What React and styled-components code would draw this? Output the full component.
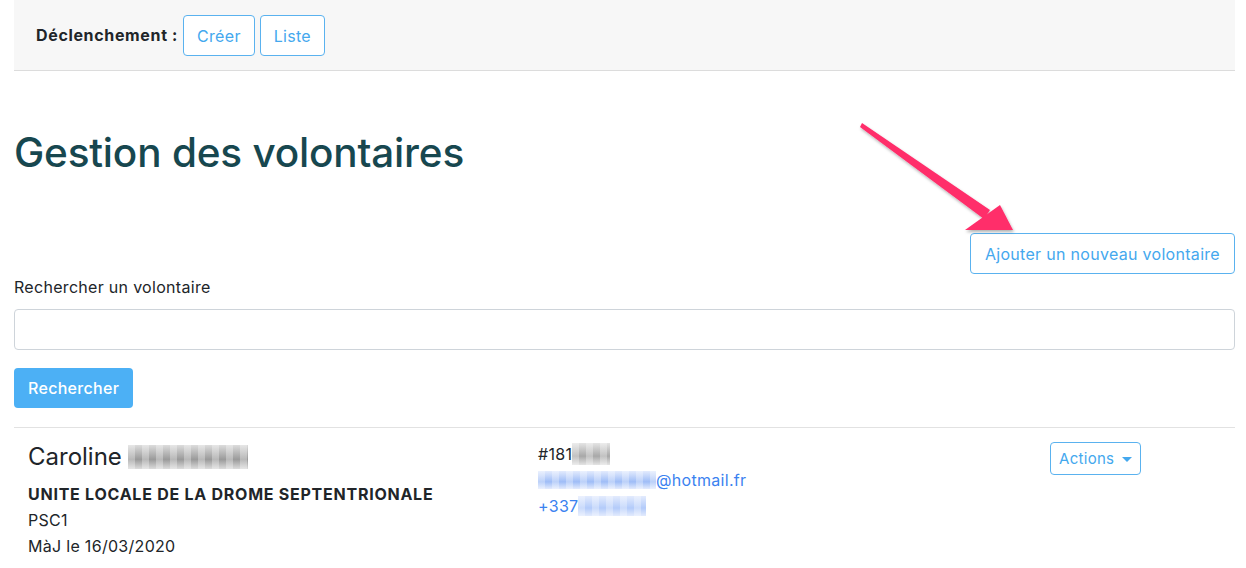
import React from "react";
import styled, { createGlobalStyle } from "styled-components";

const GlobalStyle = createGlobalStyle`
  body {
    margin: 0;
    background: #fff;
    font-family: Inter, "Liberation Sans", Arial, sans-serif;
    color: #212529;
    letter-spacing: 0.3px;
  }
`;

const Page = styled.div`
  position: relative;
  padding: 0 11px 0 14px;
  width: 1246px;
  box-sizing: border-box;
`;

const TopBar = styled.div`
  display: flex;
  align-items: center;
  gap: 5px;
  height: 71px;
  padding: 1px 0 0 22px;
  background: #f7f7f7;
  border-bottom: 1px solid #dcdcdc;
  box-sizing: border-box;
`;

const BarLabel = styled.span`
  font-weight: 700;
  font-size: 16px;
  letter-spacing: 0.65px;
  padding-bottom: 2px;
`;

const OutlineButton = styled.button`
  font-family: inherit;
  letter-spacing: 0.3px;
  font-size: ${(p) => p.$size || 16}px;
  height: ${(p) => p.$h || 41}px;
  padding: 0 ${(p) => p.$px || 13}px;
  margin-top: ${(p) => p.$mt || 0}px;
  background: #fff;
  color: #44a8ee;
  border: 1px solid #5ab2ef;
  border-radius: 4px;
  display: inline-flex;
  align-items: center;
  gap: 8px;
  cursor: pointer;
`;

const Caret = styled.span`
  width: 0;
  height: 0;
  border-left: 5px solid transparent;
  border-right: 5px solid transparent;
  border-top: 5px solid #44a8ee;
  margin-top: 1px;
`;

const Title = styled.h1`
  margin: 56px 0 0;
  font-size: 40.5px;
  font-weight: 500;
  line-height: 52px;
  color: #17474f;
  letter-spacing: -0.2px;
`;

const AddRow = styled.div`
  display: flex;
  justify-content: flex-end;
  margin-top: 54px;
`;

const SearchForm = styled.form`
  margin-top: 1px;
`;

const Label = styled.label`
  display: block;
  font-size: 16px;
  line-height: 24px;
  margin-bottom: 10px;
`;

const Input = styled.input`
  display: block;
  width: 100%;
  height: 41px;
  box-sizing: border-box;
  border: 1px solid #ced4da;
  border-radius: 4px;
  font-size: 16px;
  padding: 0 12px;
`;

const SubmitButton = styled.button`
  margin-top: 18px;
  height: 40px;
  padding: 0 14px;
  font-family: inherit;
  letter-spacing: 0.3px;
  font-size: 16px;
  font-weight: 500;
  color: #fff;
  background: #4cb0f5;
  border: none;
  border-radius: 4px;
`;

const Divider = styled.hr`
  margin: 19px 0 0;
  border: 0;
  border-top: 1px solid #e2e2e2;
`;

const Volunteer = styled.div`
  display: grid;
  grid-template-columns: 510px 512px auto;
  padding: 13px 14px;
`;

const Name = styled.div`
  font-size: 24px;
  line-height: 32px;
  letter-spacing: 0;
  display: flex;
  align-items: center;
  gap: 6px;
`;

const Info = styled.div`
  font-size: 16px;
  line-height: 26px;
  font-weight: ${(p) => (p.$bold ? 700 : 400)};
  letter-spacing: ${(p) => (p.$bold ? 0.75 : 0.3)}px;
  margin-top: ${(p) => p.$mt || 0}px;
  color: ${(p) => (p.$link ? "#3b82f0" : "#212529")};
  display: flex;
  align-items: center;
`;

const Blur = styled.span`
  display: inline-block;
  width: ${(p) => p.$w}px;
  height: ${(p) => p.$h}px;
  background:
    repeating-linear-gradient(90deg, rgba(255,255,255,0.3) 0 7px, rgba(255,255,255,0) 7px 14px),
    linear-gradient(180deg, ${(p) => p.$c1} 0%, ${(p) => p.$c2} 60%, ${(p) => p.$c1} 100%);
`;

const ArrowLayer = styled.svg`
  position: absolute;
  left: 850px;
  top: 115px;
  pointer-events: none;
`;

export default function App() {
  return (
    <>
      <GlobalStyle />
      <Page>
        <TopBar>
          <BarLabel>Déclenchement :</BarLabel>
          <OutlineButton>Créer</OutlineButton>
          <OutlineButton>Liste</OutlineButton>
        </TopBar>

        <Title>Gestion des volontaires</Title>

        <AddRow>
          <OutlineButton $px={14}>Ajouter un nouveau volontaire</OutlineButton>
        </AddRow>

        <SearchForm onSubmit={(e) => e.preventDefault()}>
          <Label>Rechercher un volontaire</Label>
          <Input type="text" />
          <SubmitButton type="submit">Rechercher</SubmitButton>
        </SearchForm>

        <Divider />

        <Volunteer>
          <div>
            <Name>
              Caroline
              <Blur $w={120} $h={24} $c1="#dcdcdc" $c2="#9a9a9a" />
            </Name>
            <Info $bold $mt={8}>UNITE LOCALE DE LA DROME SEPTENTRIONALE</Info>
            <Info>PSC1</Info>
            <Info>MàJ le 16/03/2020</Info>
          </div>
          <div>
            <Info>
              #181
              <Blur $w={38} $h={22} $c1="#e4e4e4" $c2="#a8a8a8" />
            </Info>
            <Info $link>
              <Blur $w={118} $h={18} $c1="#e3ebfd" $c2="#9fbdf7" />
              @hotmail.fr
            </Info>
            <Info $link>
              +337
              <Blur $w={68} $h={20} $c1="#e3ebfd" $c2="#b3cbfa" />
            </Info>
          </div>
          <div>
            <OutlineButton $h={33} $size={15} $px={8} $mt={1}>
              Actions <Caret />
            </OutlineButton>
          </div>
        </Volunteer>

        <ArrowLayer width="200" height="130" viewBox="0 0 200 130">
          <defs>
            <filter id="sh" x="-20%" y="-20%" width="140%" height="140%">
              <feDropShadow dx="1" dy="2" stdDeviation="1.5" floodColor="#000" floodOpacity="0.3" />
            </filter>
          </defs>
          <g filter="url(#sh)" fill="#ff2d6b">
            <path d="M10 12 L12 8 L140 95 L134 104 Z" />
            <path d="M115 115 L163 115 L150 90 Z" />
          </g>
        </ArrowLayer>
      </Page>
    </>
  );
}
